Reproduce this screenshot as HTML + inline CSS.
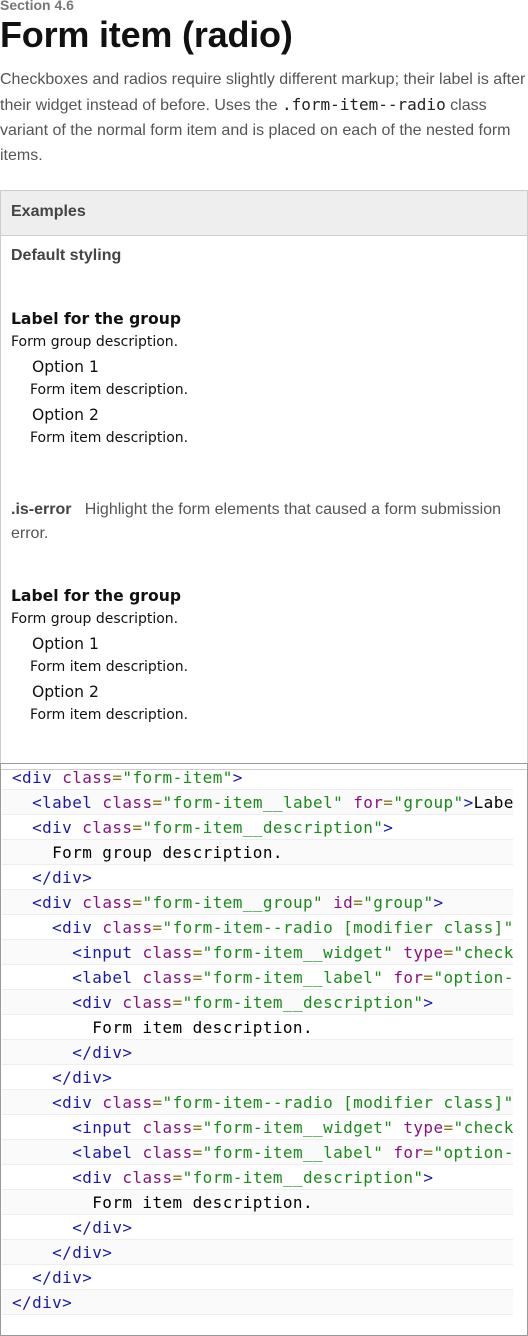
<!DOCTYPE html>
<html><head><meta charset="utf-8"><style>
*{margin:0;padding:0;box-sizing:border-box}
body{width:528px;height:1336px;background:#fff;font-family:"Liberation Sans",sans-serif;color:#555;position:relative;overflow:hidden}
.a{position:absolute;white-space:nowrap}
.sec{left:0;top:-3px;font-size:14px;font-weight:bold;color:#777}
h1{position:absolute;left:0;top:14px;font-size:36px;font-weight:bold;color:#111;letter-spacing:-0.2px}
.intro{position:absolute;left:0;top:67px;width:528px;font-size:16px;line-height:25px;color:#555}
.intro code{font-family:"DejaVu Sans Mono",monospace;font-size:16px;color:#222}
.ex{position:absolute;left:0;top:190px;width:528px;height:580px;border:1px solid #ccc}
.exh{position:absolute;left:0;top:0;width:526px;height:45px;background:#eee;border-bottom:1px solid #ccc;font-size:16px;font-weight:bold;color:#444;padding:12px 10px}
.v{font-family:"DejaVu Sans",Verdana,sans-serif;color:#111}
.lb{font-size:15.6px;font-weight:bold}
.ds{font-size:14px}
.op{font-size:15.6px}
.code{position:absolute;left:0;top:763px;width:528px;height:573px;border:1px solid #999}
.ln{position:absolute;left:1px;width:511px;height:25px;border-bottom:1px solid #eee;font-family:"DejaVu Sans Mono",monospace;font-size:16px;letter-spacing:0.4px;line-height:25px;white-space:pre;overflow:hidden;color:#000;padding-left:10px}
.ln:nth-child(even){background:#fafafa}
.t{color:#1a1aa6}.n{color:#881280}.s{color:#1a8a1a}.q{color:#88771a}
</style></head><body>
<div class="a sec">Section 4.6</div>
<h1>Form item (radio)</h1>
<div class="intro">Checkboxes and radios require slightly different markup; their label is after their widget instead of before. Uses the <code>.form-item--radio</code> class variant of the normal form item and is placed on each of the nested form items.</div>
<div class="ex"><div class="exh">Examples</div></div>
<div class="a" style="left:11px;top:247px;font-size:16px;font-weight:bold;color:#444">Default styling</div>
<div class="a v lb" style="left:11px;top:310px">Label for the group</div>
<div class="a v ds" style="left:11px;top:334px">Form group description.</div>
<div class="a v op" style="left:32px;top:358px">Option 1</div>
<div class="a v ds" style="left:30px;top:382px">Form item description.</div>
<div class="a v op" style="left:32px;top:406px">Option 2</div>
<div class="a v ds" style="left:30px;top:430px">Form item description.</div>
<div class="a" style="left:11px;top:501px;font-size:16px;color:#555"><b style="color:#444">.is-error</b>&nbsp;&nbsp; Highlight the form elements that caused a form submission</div>
<div class="a" style="left:11px;top:525px;font-size:16px;color:#555">error.</div>
<div class="a v lb" style="left:11px;top:587px">Label for the group</div>
<div class="a v ds" style="left:11px;top:611px">Form group description.</div>
<div class="a v op" style="left:32px;top:635px">Option 1</div>
<div class="a v ds" style="left:30px;top:659px">Form item description.</div>
<div class="a v op" style="left:32px;top:683px">Option 2</div>
<div class="a v ds" style="left:30px;top:707px">Form item description.</div>
<div class="code">
<div class="ln" style="top:1px"><span class="t">&lt;div</span> <span class="n">class</span><span class="q">=</span><span class="s">"form-item"</span><span class="t">&gt;</span></div>
<div class="ln" style="top:26px">  <span class="t">&lt;label</span> <span class="n">class</span><span class="q">=</span><span class="s">"form-item__label"</span> <span class="n">for</span><span class="q">=</span><span class="s">"group"</span><span class="t">&gt;</span>Label for the group</div>
<div class="ln" style="top:51px">  <span class="t">&lt;div</span> <span class="n">class</span><span class="q">=</span><span class="s">"form-item__description"</span><span class="t">&gt;</span></div>
<div class="ln" style="top:76px">    Form group description.</div>
<div class="ln" style="top:101px">  <span class="t">&lt;/div&gt;</span></div>
<div class="ln" style="top:126px">  <span class="t">&lt;div</span> <span class="n">class</span><span class="q">=</span><span class="s">"form-item__group"</span> <span class="n">id</span><span class="q">=</span><span class="s">"group"</span><span class="t">&gt;</span></div>
<div class="ln" style="top:151px">    <span class="t">&lt;div</span> <span class="n">class</span><span class="q">=</span><span class="s">"form-item--radio [modifier class]"</span><span class="t">&gt;</span></div>
<div class="ln" style="top:176px">      <span class="t">&lt;input</span> <span class="n">class</span><span class="q">=</span><span class="s">"form-item__widget"</span> <span class="n">type</span><span class="q">=</span><span class="s">"checkbox"</span></div>
<div class="ln" style="top:201px">      <span class="t">&lt;label</span> <span class="n">class</span><span class="q">=</span><span class="s">"form-item__label"</span> <span class="n">for</span><span class="q">=</span><span class="s">"option-1"</span></div>
<div class="ln" style="top:226px">      <span class="t">&lt;div</span> <span class="n">class</span><span class="q">=</span><span class="s">"form-item__description"</span><span class="t">&gt;</span></div>
<div class="ln" style="top:251px">        Form item description.</div>
<div class="ln" style="top:276px">      <span class="t">&lt;/div&gt;</span></div>
<div class="ln" style="top:301px">    <span class="t">&lt;/div&gt;</span></div>
<div class="ln" style="top:326px">    <span class="t">&lt;div</span> <span class="n">class</span><span class="q">=</span><span class="s">"form-item--radio [modifier class]"</span><span class="t">&gt;</span></div>
<div class="ln" style="top:351px">      <span class="t">&lt;input</span> <span class="n">class</span><span class="q">=</span><span class="s">"form-item__widget"</span> <span class="n">type</span><span class="q">=</span><span class="s">"checkbox"</span></div>
<div class="ln" style="top:376px">      <span class="t">&lt;label</span> <span class="n">class</span><span class="q">=</span><span class="s">"form-item__label"</span> <span class="n">for</span><span class="q">=</span><span class="s">"option-2"</span></div>
<div class="ln" style="top:401px">      <span class="t">&lt;div</span> <span class="n">class</span><span class="q">=</span><span class="s">"form-item__description"</span><span class="t">&gt;</span></div>
<div class="ln" style="top:426px">        Form item description.</div>
<div class="ln" style="top:451px">      <span class="t">&lt;/div&gt;</span></div>
<div class="ln" style="top:476px">    <span class="t">&lt;/div&gt;</span></div>
<div class="ln" style="top:501px">  <span class="t">&lt;/div&gt;</span></div>
<div class="ln" style="top:526px"><span class="t">&lt;/div&gt;</span></div>
</div>
</body></html>
